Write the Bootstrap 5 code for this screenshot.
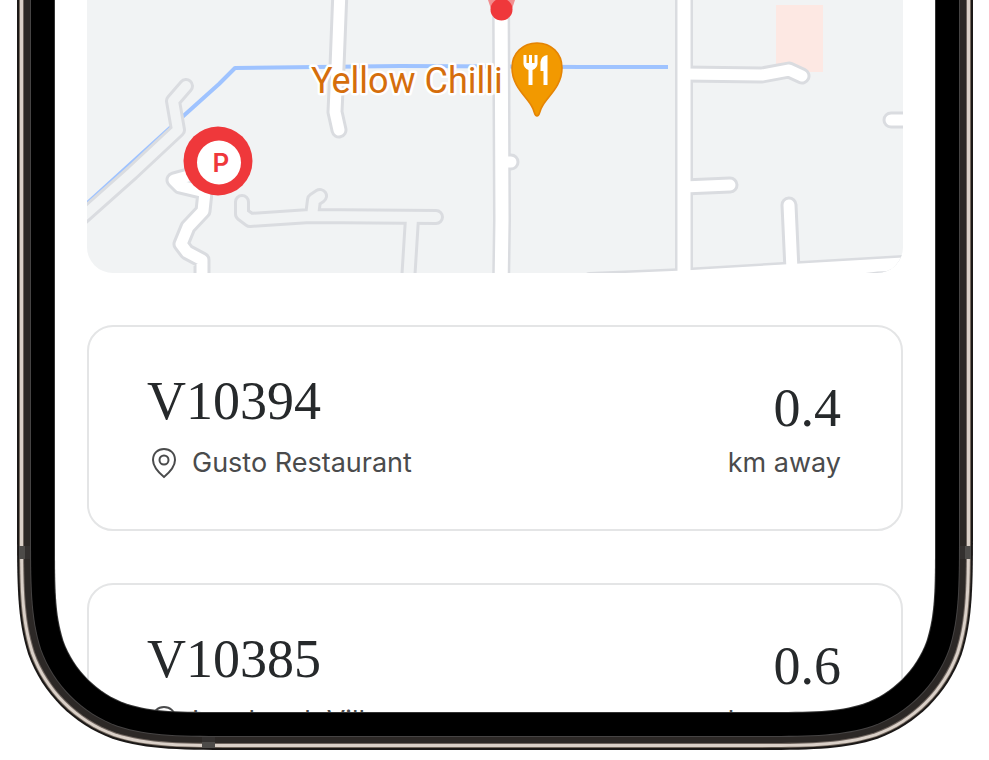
<!DOCTYPE html>
<html lang="en">
<head>
<meta charset="utf-8">
<meta name="viewport" content="width=device-width, initial-scale=1">
<title>Nearby vehicles</title>
<link href="https://cdn.jsdelivr.net/npm/bootstrap@5.3.0/dist/css/bootstrap.min.css" rel="stylesheet">
<style>
body{background:#fff;overflow:hidden;color:#26292b;font-family:Inter,"Liberation Sans",sans-serif}
.phone{margin:0 16px 0 17px;height:750px}
.rail{width:38px;background:linear-gradient(90deg,#1b1817 0 2px,#74695f 2px 3px,#dad0c8 3px 6px,#6f655f 6px 7px,#2c2826 7px 13px,#464444 13px 14px,#000 14px 37px,#333 37px)}
.rail-end{transform:scaleX(-1)}
.screen{padding:0 32px;min-width:0}
.map-view{border-radius:0 0 26px 26px;margin-bottom:52px;background:#f1f3f4;height:273px}
.map-view svg{height:273px;width:100%}
.spot{border:2px solid #e4e5e6;border-radius:26px;height:206px;margin-bottom:52px;padding:44px 60px 0 58px}
.code-no{font:54px/60px "Liberation Serif",serif;margin:0}
.place{font-size:27px;line-height:36px;margin-top:14px;color:#4a4b4c}
.km{padding-top:7px}
.km .place{margin-top:7px}
.bottom-frame{height:260px;z-index:2}
.bottom-strip{height:38px;background:linear-gradient(0deg,#1b1817 0 2px,#74695f 2px 3px,#dad0c8 3px 6px,#6f655f 6px 7px,#2c2826 7px 13px,#464444 13px 14px,#000 14px 37px,#333 37px)}
</style>
<script src="https://cdn.jsdelivr.net/npm/bootstrap@5.3.0/dist/js/bootstrap.bundle.min.js"></script>
</head>
<body>
<main class="phone position-relative overflow-hidden d-flex">
  <div class="rail flex-shrink-0"></div>
  <div class="screen flex-grow-1">
    <section class="map-view overflow-hidden" aria-label="Map">
      <svg class="d-block" viewBox="87 0 816 273" preserveAspectRatio="xMidYMid slice" fill="none" stroke-linejoin="round" stroke-linecap="round">
        <path d="M776 5H823V72H776Z" fill="#fde8e3"/>
        <path d="M82 208L170 128L219 84L235 68L400 66L580 67H668" stroke="#9fc3ff" stroke-width="4" stroke-linecap="butt"/>
        <g id="side-roads">
          <g stroke="#dadce0" stroke-width="16"><path d="M78 221L132 173L178 130L173 101L186 86"/><path d="M242 202V214L250 220L310 216L436 217M312 216L314 200L320 196"/><path d="M412 218L408 282"/></g>
          <g stroke="#f1f3f4" stroke-width="10"><path d="M78 221L132 173L178 130L173 101L186 86"/><path d="M242 202V214L250 220L310 216L436 217M312 216L314 200L320 196"/><path d="M412 218L408 282"/></g>
        </g>
        <g stroke="#dadce0">
          <g stroke-width="17"><path d="M340 -10L337 67L335 112L339 130"/><path d="M199 173L174 180L180 186L205 192L203 211L188 227L181 244L187 252L202 260V283"/><path d="M684 74L762 75L789 70L802 76"/><path d="M684 187L730 185"/><path d="M789 205L792 270"/><path d="M910 120H891"/><path d="M505 162H511"/></g>
          <path d="M501 -10L502 220L501 290" stroke-width="18"/><path d="M684 -10V290" stroke-width="18"/><path d="M590 280L684 276L920 262" stroke-width="16"/>
        </g>
        <g stroke="#fff">
          <g stroke-width="11"><path d="M340 -10L337 67L335 112L339 130"/><path d="M199 173L174 180L180 186L205 192L203 211L188 227L181 244L187 252L202 260V283"/><path d="M684 74L762 75L789 70L802 76"/><path d="M684 187L730 185"/><path d="M789 205L792 270"/><path d="M910 120H891"/><path d="M505 162H511"/></g>
          <path d="M501 -10L502 220L501 290" stroke-width="13"/><path d="M684 -10V290" stroke-width="13"/><path d="M590 280L684 276L920 262" stroke-width="11"/>
        </g>
        <path d="M690 276L845 271L903 264V280H690Z" fill="#fff"/>
        <path d="M860 274Q875 271 890 271L882 274Z" fill="#dadce0"/>
        <text x="311" y="93" font-family="Roboto,sans-serif" font-size="36" fill="#d56e0c" stroke="#fff" stroke-width="5" paint-order="stroke">Yellow Chilli</text>
        <path d="M537 116C534 116 535 111 531 105C526 96 512 86 512 68C512 53 523 43 537 43S562 53 562 68C562 86 548 96 543 105C539 111 540 116 537 116Z" fill="#f29900" stroke="#e58404" stroke-width="1.6"/>
        <path d="M523.500 55H526.500V63H529V55H532V63H534.500V55H537.500V64Q537 68 532.500 70V85H528.500V70Q524 68 523.500 64Z" fill="#fff"/>
        <path d="M547.500 55V85H543.500V71H540.500V62Q541 56 547.500 55Z" fill="#fff"/>
        <path d="M487 -3H516L511 12H492Z" fill="#f28f90"/>
        <circle cx="501.500" cy="9.500" r="11" fill="#ef383b"/>
        <circle cx="218" cy="161" r="34.500" fill="#ef383b"/><circle cx="219" cy="162.500" r="22" fill="#fff"/>
        <text x="221" y="172" text-anchor="middle" font-family="Inter,sans-serif" font-size="26" font-weight="600" fill="#ef383b">P</text>
      </svg>
    </section>
    <article class="spot d-flex justify-content-between">
      <div>
        <h2 class="code-no">V10394</h2>
        <div class="place d-flex align-items-center gap-3"><svg width="29" height="32" viewBox="0 0 29 32" fill="none" stroke="#4a4b4c" stroke-width="2"><path d="M17 30C14 27.500 6 20.500 6 13C6 6 11 2 17 2S28 6 28 13C28 20.500 20 27.500 17 30Z"/><circle cx="17" cy="13" r="4.500"/></svg>Gusto Restaurant</div>
      </div>
      <div class="km text-end"><div class="code-no">0.4</div><div class="place">km away</div></div>
    </article>
    <article class="spot d-flex justify-content-between">
      <div>
        <h2 class="code-no">V10385</h2>
        <div class="place d-flex align-items-center gap-3"><svg width="29" height="32" viewBox="0 0 29 32" fill="none" stroke="#4a4b4c" stroke-width="2"><path d="M17 30C14 27.500 6 20.500 6 13C6 6 11 2 17 2S28 6 28 13C28 20.500 20 27.500 17 30Z"/><circle cx="17" cy="13" r="4.500"/></svg>Landmark Villa</div>
      </div>
      <div class="km text-end"><div class="code-no">0.6</div><div class="place">km away</div></div>
    </article>
  </div>
  <div class="rail rail-end flex-shrink-0"></div>
  <div class="bottom-frame position-absolute bottom-0 start-0 end-0 d-flex align-items-end">
    <svg class="flex-shrink-0" width="260" height="260" viewBox="0 -260 260 260">
      <defs>
        <path id="corner" d="M0-1000V-230.800C0-164.400 0-131.100 11.300-95.400C25.500-56.300 56.300-25.500 95.400-11.300C131.100 0 164.400 0 230.800 0H2000V-1000Z"/>
        <mask id="glass" maskUnits="userSpaceOnUse" x="0" y="-260" width="260" height="260"><path fill="#fff" d="M0-260H260V0H0Z"/><use href="#corner" fill="#000" transform="translate(38 -38) scale(.748)"/></mask>
      </defs>
      <g id="bezel" mask="url(#glass)">
        <path fill="#fff" d="M0-260H260V0H0Z"/>
        <use href="#corner" fill="#1b1817"/>
        <use href="#corner" fill="#74695f" transform="translate(2 -2) scale(.987)"/>
        <use href="#corner" fill="#dad0c8" transform="translate(3 -3) scale(.980)"/>
        <use href="#corner" fill="#6f655f" transform="translate(6 -6) scale(.960)"/>
        <use href="#corner" fill="#2c2826" transform="translate(7 -7) scale(.954)"/>
        <use href="#corner" fill="#464444" transform="translate(13 -13) scale(.914)"/>
        <use href="#corner" fill="#000" transform="translate(14 -14) scale(.907)"/>
        <use href="#corner" fill="#333" transform="translate(37 -37) scale(.755)"/>
      </g>
      <path d="M2-204H8V-191H2ZM185-8H198V-2H185Z" fill="#4d4b49"/><path d="M8-204H13V-191H8ZM185-13H198V-8H185Z" fill="#33302f"/>
    </svg>
    <div class="bottom-strip flex-grow-1"></div>
    <svg class="flex-shrink-0 rail-end" width="260" height="260" viewBox="0 -260 260 260"><use href="#bezel"/><path d="M2-204H8V-191H2Z" fill="#4d4b49"/><path d="M8-204H13V-191H8Z" fill="#33302f"/></svg>
  </div>
</main>
</body>
</html>
